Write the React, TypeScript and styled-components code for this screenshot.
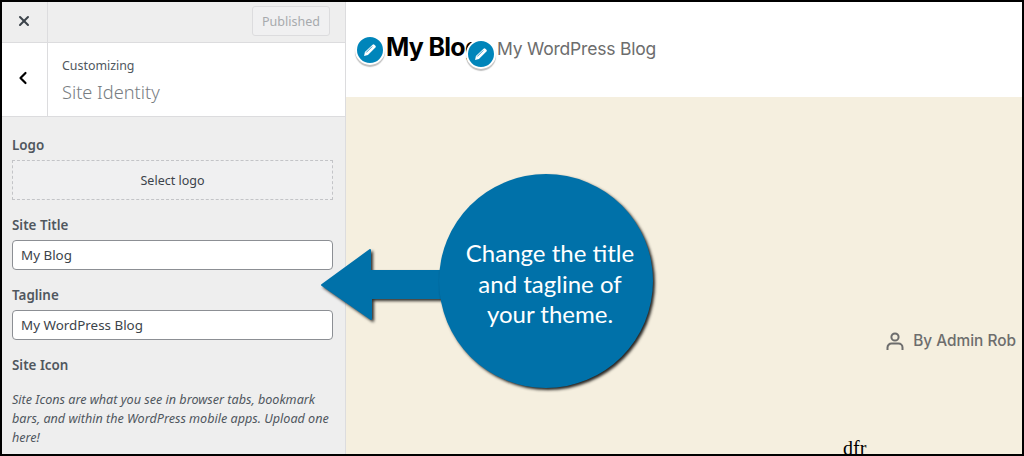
import React from "react";
import styled, { createGlobalStyle } from "styled-components";
import { X, ChevronLeft } from "lucide-react";

const GlobalStyle = createGlobalStyle`
  html, body {
    margin: 0;
    padding: 0;
    width: 1024px;
    height: 456px;
    overflow: hidden;
  }
  * {
    box-sizing: border-box;
  }
`;

const Frame = styled.div`
  width: 1024px;
  height: 456px;
  border: 2px solid #000;
  display: flex;
  position: relative;
  overflow: hidden;
  font-family: "Noto Sans", "Open Sans", sans-serif;
`;

const Sidebar = styled.aside`
  width: 344px;
  flex-shrink: 0;
  background: #eeeeee;
  border-right: 1px solid #dcdcde;
  display: flex;
  flex-direction: column;
`;

const TopBar = styled.div`
  height: 41px;
  display: flex;
  border-bottom: 1px solid #dcdcde;
`;

const CloseCell = styled.div`
  width: 46px;
  border-right: 1px solid #dcdcde;
  display: flex;
  align-items: center;
  justify-content: center;
  padding: 0 2px 3px 0;
  color: #3c434a;
`;

const PublishArea = styled.div`
  flex: 1;
  display: flex;
  justify-content: flex-end;
  align-items: flex-start;
  padding: 4px 15px 0 0;
`;

const PublishedButton = styled.div`
  width: 78px;
  height: 30px;
  border: 1px solid #dcdcde;
  border-radius: 3px;
  background: #f0f0f1;
  color: #a7aaad;
  font-size: 12.5px;
  display: flex;
  align-items: center;
  justify-content: center;
`;

const SectionHead = styled.div`
  height: 74px;
  background: #fff;
  display: flex;
  border-bottom: 1px solid #dcdcde;
`;

const BackCell = styled.div`
  width: 46px;
  border-right: 1px solid #dcdcde;
  display: flex;
  align-items: center;
  justify-content: center;
  padding: 0 3px 4px 0;
  color: #000;
`;

const SectionTitles = styled.div`
  padding: 14px 0 0 14px;
`;

const Crumb = styled.div`
  font-size: 12.4px;
  line-height: 18px;
  color: #50575e;
`;

const SectionName = styled.div`
  font-size: 18.2px;
  line-height: 28px;
  margin-top: 3px;
  font-weight: 300;
  color: #787d82;
`;

const Controls = styled.div`
  padding: 18px 12px 0 10px;
  display: flex;
  flex-direction: column;
`;

const Label = styled.div`
  font-size: 13.4px;
  font-weight: 600;
  line-height: 20px;
  color: #50575e;
  margin-bottom: 5px;
`;

const LogoDrop = styled.div`
  height: 40px;
  border: 1px dashed #c3c4c7;
  background: #f0f0f1;
  font-size: 12.5px;
  color: #3c434a;
  display: flex;
  align-items: center;
  justify-content: center;
  margin-bottom: 15px;
`;

const TextField = styled.div`
  height: 30px;
  border: 1px solid #8c8f94;
  border-radius: 4px;
  background: #fff;
  font-size: 13.4px;
  color: #3c434a;
  padding: 0 8px;
  display: flex;
  align-items: center;
  margin-bottom: 15px;
`;

const Hint = styled.p`
  margin: 10px 0 0;
  font-size: 12.6px;
  line-height: 19px;
  font-style: italic;
  color: #50575e;
`;

const Preview = styled.main`
  flex: 1;
  display: flex;
  flex-direction: column;
  background: #f5efdf;
`;

const SiteHeader = styled.header`
  height: 95px;
  flex-shrink: 0;
  background: #fff;
  display: flex;
  align-items: flex-start;
  font-family: Inter, Roboto, sans-serif;
`;

const SiteTitle = styled.div`
  margin: 29px 0 0 40px;
  width: 95px;
  font-size: 25px;
  line-height: 32px;
  font-weight: 700;
  letter-spacing: -0.7px;
  white-space: nowrap;
  color: #000;
`;

const Tagline = styled.div`
  margin: 35px 0 0 16px;
  font-size: 17.5px;
  line-height: 24px;
  letter-spacing: -0.2px;
  white-space: nowrap;
  color: #6d6d6d;
`;

const PencilBadge = styled.span<{ $left: number; $top: number }>`
  position: absolute;
  left: ${(p) => p.$left}px;
  top: ${(p) => p.$top}px;
  width: 30px;
  height: 30px;
  border-radius: 50%;
  background: #0085ba;
  border: 2px solid #fff;
  box-shadow: 0 2px 1px rgba(0, 0, 0, 0.25);
  display: flex;
  align-items: center;
  justify-content: center;
`;

const PreviewBody = styled.div`
  flex: 1;
  position: relative;
`;

const Author = styled.div`
  position: absolute;
  right: 6px;
  top: 232px;
  display: flex;
  align-items: center;
  gap: 9px;
  font-family: Inter, Roboto, sans-serif;
  font-size: 15.4px;
  font-weight: 500;
  line-height: 24px;
  color: #6d6d6d;
`;

const Stray = styled.div`
  position: absolute;
  left: 497px;
  top: 340px;
  font-family: "Liberation Serif", serif;
  font-size: 20px;
  line-height: 22px;
  color: #000;
`;

const ArrowShape = styled.svg`
  position: absolute;
  left: 315px;
  top: 240px;
  filter: drop-shadow(2px 2px 1.5px rgba(0, 0, 0, 0.8));
`;

const Bubble = styled.div`
  position: absolute;
  left: 437px;
  top: 172px;
  width: 214px;
  height: 214px;
  border-radius: 50%;
  background: #0071a9;
  box-shadow: 2px 2px 3px rgba(0, 0, 0, 0.85);
  display: flex;
  align-items: center;
  justify-content: center;
  padding: 6px 0 0 8px;
  text-align: center;
  color: #fff;
  font-family: Lato, "Open Sans", sans-serif;
  font-size: 24px;
  line-height: 30.5px;
`;

const Pencil = () => (
  <svg width="16" height="16" viewBox="0 0 20 20" fill="#fff">
    <path d="M13.2 3.4a1.6 1.6 0 0 1 2.2 0l1.4 1.4a1.6 1.6 0 0 1 0 2.2L7.4 16.4 2.6 17.4l1-4.8z" />
    <path d="M5.2 13.2l7.6-7.6" stroke="#0085ba" strokeWidth="1" />
  </svg>
);

const AuthorIcon = () => (
  <svg width="18" height="20" viewBox="0 0 18 20" fill="none" stroke="#6d6d6d" strokeWidth="2">
    <circle cx="9" cy="6" r="3.6" />
    <path d="M1.5 19v-2.5a4 4 0 0 1 4-4h7a4 4 0 0 1 4 4V19" />
  </svg>
);

export default function App() {
  return (
    <>
      <GlobalStyle />
      <Frame>
        <Sidebar>
          <TopBar>
            <CloseCell>
              <X size={16} strokeWidth={3} />
            </CloseCell>
            <PublishArea>
              <PublishedButton>Published</PublishedButton>
            </PublishArea>
          </TopBar>
          <SectionHead>
            <BackCell>
              <ChevronLeft size={20} strokeWidth={2.6} />
            </BackCell>
            <SectionTitles>
              <Crumb>Customizing</Crumb>
              <SectionName>Site Identity</SectionName>
            </SectionTitles>
          </SectionHead>
          <Controls>
            <Label>Logo</Label>
            <LogoDrop>Select logo</LogoDrop>
            <Label>Site Title</Label>
            <TextField>My Blog</TextField>
            <Label>Tagline</Label>
            <TextField>My WordPress Blog</TextField>
            <Label>Site Icon</Label>
            <Hint>
              Site Icons are what you see in browser tabs, bookmark bars, and within the WordPress
              mobile apps. Upload one here!
            </Hint>
          </Controls>
        </Sidebar>
        <Preview>
          <SiteHeader>
            <SiteTitle>My Blog</SiteTitle>
            <Tagline>My WordPress Blog</Tagline>
          </SiteHeader>
          <PreviewBody>
            <Author>
              <AuthorIcon />
              By Admin Rob
            </Author>
            <Stray>dfr</Stray>
          </PreviewBody>
        </Preview>
        <PencilBadge $left={353} $top={33}>
          <Pencil />
        </PencilBadge>
        <PencilBadge $left={464} $top={37}>
          <Pencil />
        </PencilBadge>
        <ArrowShape width="130" height="90" viewBox="0 0 130 90">
          <path d="M5 43 L53 8 L53 29 L128 29 L128 56 L54 56 L54 77 Z" fill="#0071a9" stroke="#0071a9" strokeWidth="2" strokeLinejoin="round" />
        </ArrowShape>
        <Bubble>
          <div>
            Change the title
            <br />
            and tagline of
            <br />
            your theme.
          </div>
        </Bubble>
      </Frame>
    </>
  );
}
